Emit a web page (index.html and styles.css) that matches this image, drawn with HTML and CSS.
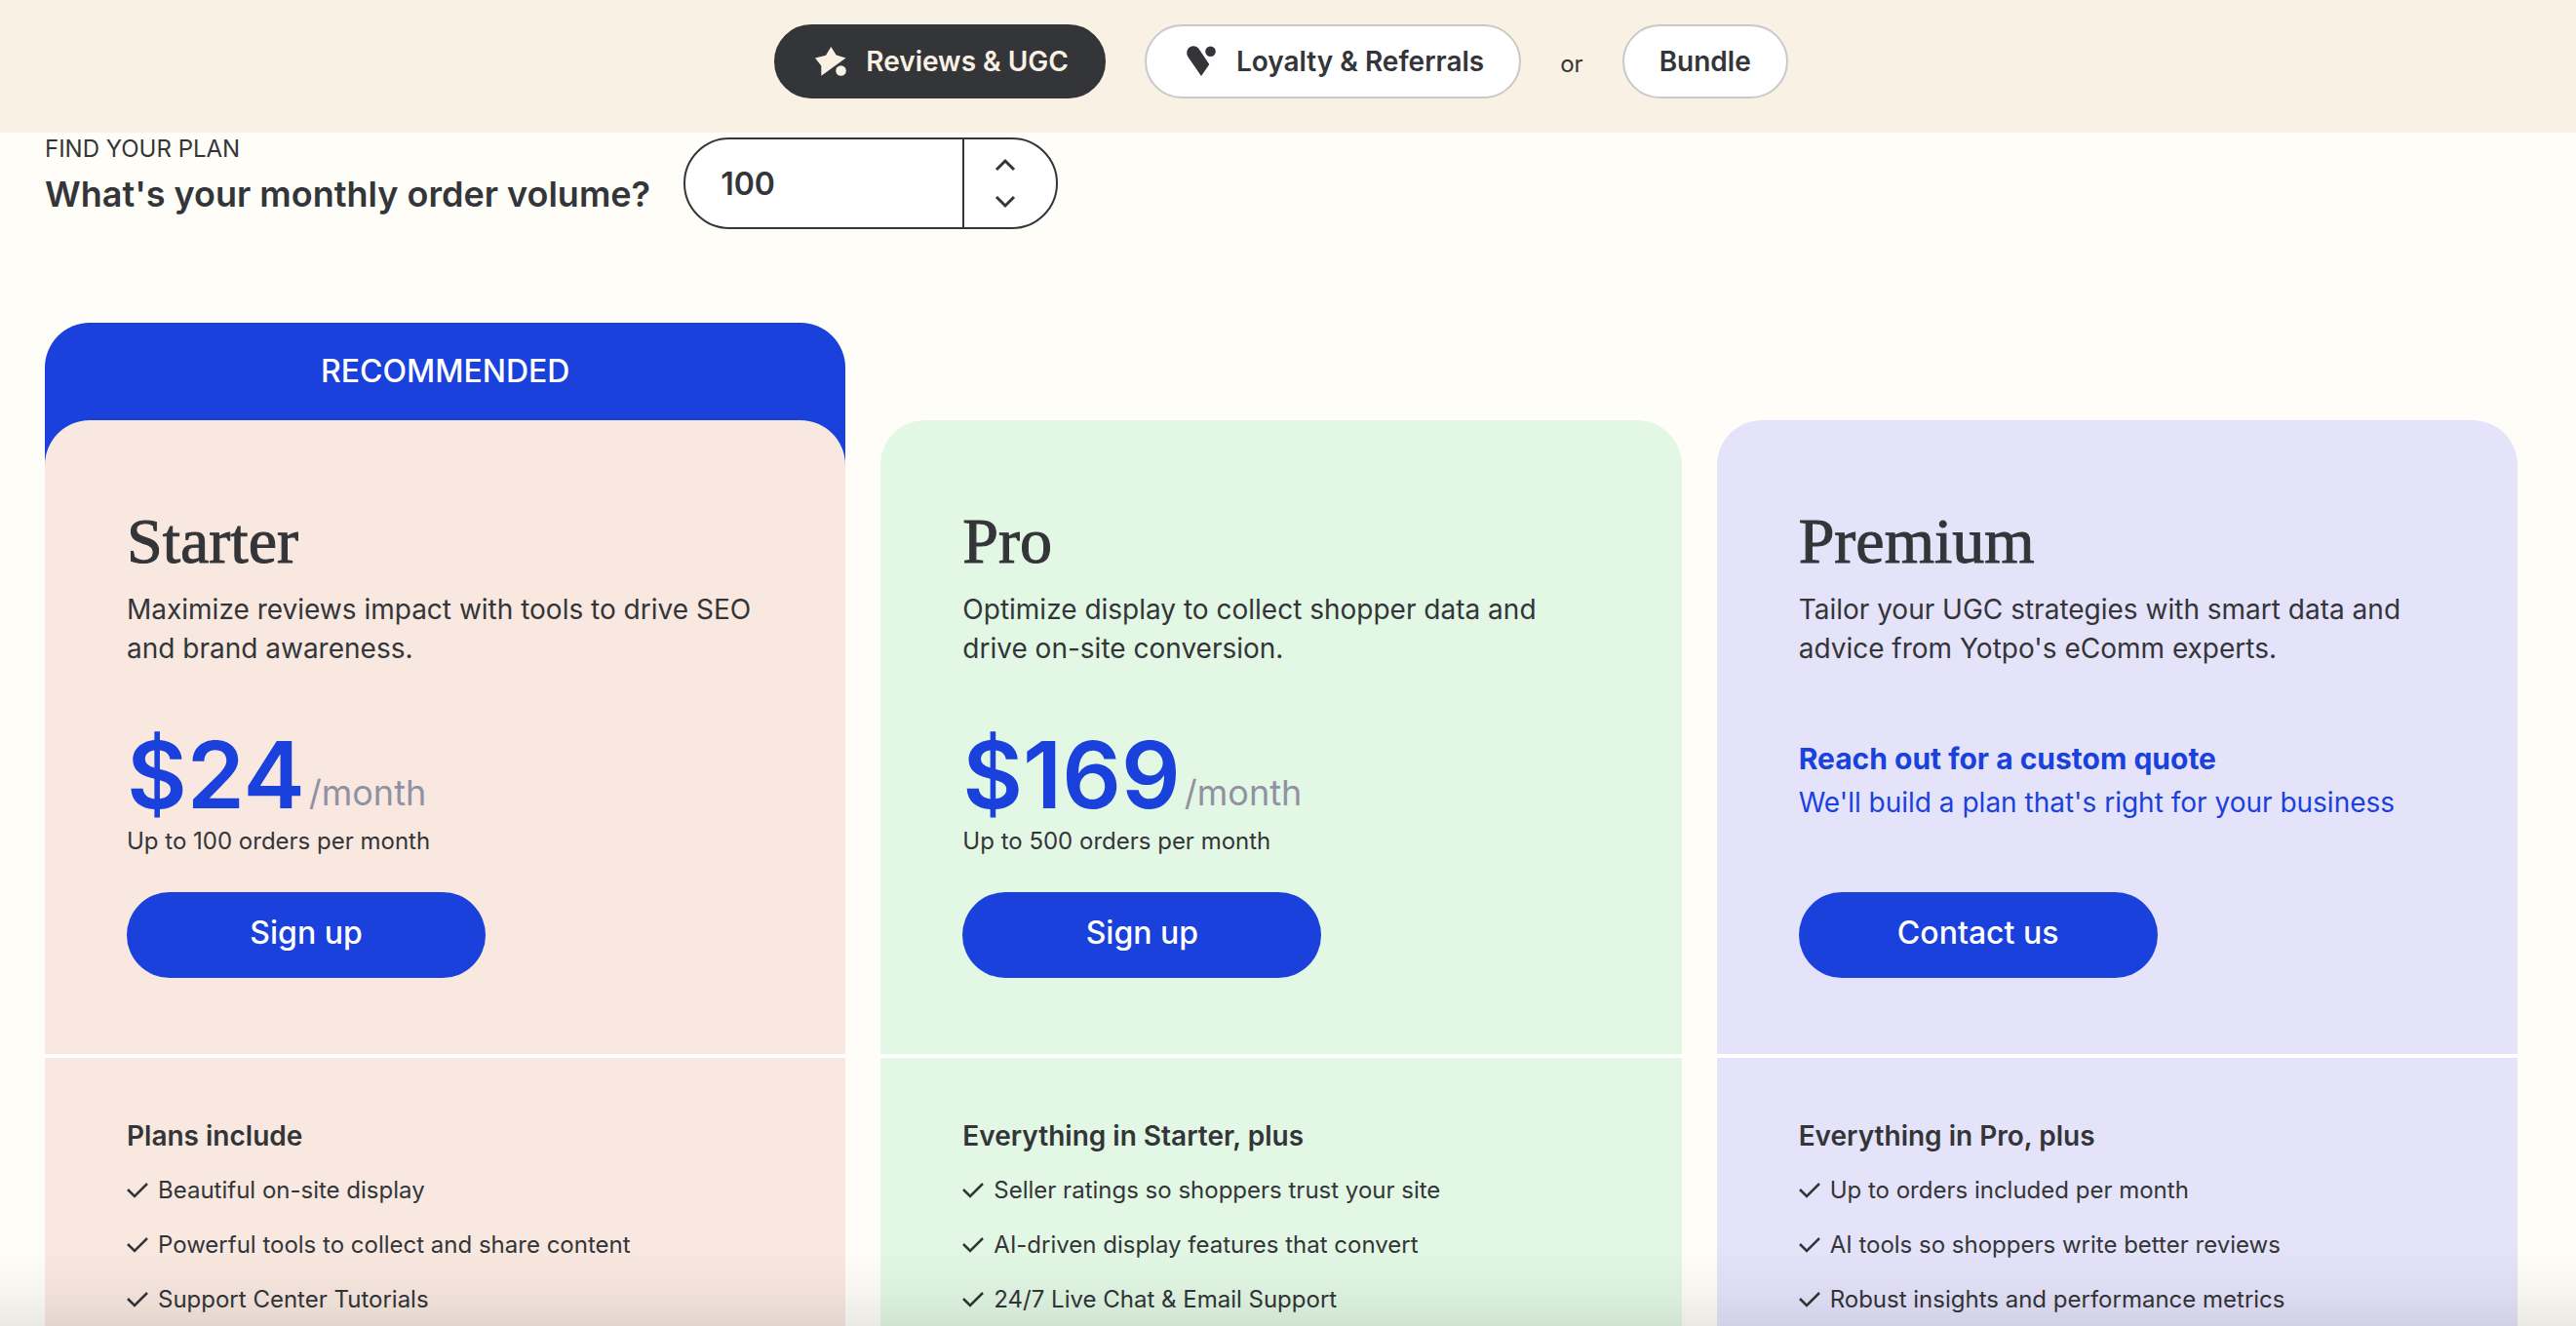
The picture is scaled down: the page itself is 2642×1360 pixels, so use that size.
FILE: index.html
```html
<!DOCTYPE html>
<html lang="en">
<head>
  <meta charset="UTF-8">
  <meta name="viewport" content="width=device-width, initial-scale=1.0">
  <title>Pricing</title>
  <link rel="stylesheet" href="styles.css">
</head>
<body>
  <nav class="product-nav">
    <button class="pill active" type="button">
      <svg class="pill-icon" viewBox="-4 0 36 32" fill="currentColor" aria-hidden="true">
        <path d="M16.300 1 21.700 9.500 31.500 12.500 6.300 30.700V20.500L0 12.500 11 9.800Z"/>
        <circle cx="26.500" cy="25.500" r="5.300"/>
      </svg>
      Reviews &amp; UGC
    </button>
    <button class="pill" type="button">
      <svg class="pill-icon" viewBox="-4 0 36 32" fill="currentColor" aria-hidden="true">
        <path d="M2.400 11.200C-.6 6 2.600.3 8 .3c2.400 0 4.400 1 5.700 3L24.300 19 16 31Z"/>
        <circle cx="25.500" cy="5.800" r="5.300"/>
      </svg>
      Loyalty &amp; Referrals
    </button>
    <span class="or">or</span>
    <button class="pill" type="button">Bundle</button>
  </nav>

  <main class="pricing">
    <form class="volume">
      <label class="volume-label" for="orders">
        <span class="volume-eyebrow">FIND YOUR PLAN</span>
        <span class="volume-question">What's your monthly order volume?</span>
      </label>
      <div class="stepper">
        <input class="stepper-input" id="orders" type="number" min="0" step="50" value="100">
        <div class="stepper-buttons">
          <button class="step" id="stepUp" type="button" aria-label="Increase">
            <svg class="chevron" viewBox="0 0 22 14" aria-hidden="true"><path d="M2 12 11 3l9 9"/></svg>
          </button>
          <button class="step" id="stepDown" type="button" aria-label="Decrease">
            <svg class="chevron" viewBox="0 0 22 14" aria-hidden="true"><path d="m2 2 9 9 9-9"/></svg>
          </button>
        </div>
      </div>
    </form>

    <div class="plans">
      <section class="plan recommended">
        <div class="ribbon">RECOMMENDED</div>
        <div class="card starter">
          <div class="card-top">
            <h2 class="plan-name">Starter</h2>
            <p class="plan-desc">Maximize reviews impact with tools to drive SEO and brand awareness.</p>
            <div class="offer">
              <div class="price"><strong class="amount">$24</strong><span class="period">/month</span></div>
              <p class="limit">Up to 100 orders per month</p>
            </div>
            <a class="cta" href="#">Sign up</a>
          </div>
          <div class="card-features">
            <h3 class="features-title">Plans include</h3>
            <ul class="features">
              <li>Beautiful on-site display</li>
              <li>Powerful tools to collect and share content</li>
              <li>Support Center Tutorials</li>
            </ul>
          </div>
        </div>
      </section>

      <section class="plan">
        <div class="card pro">
          <div class="card-top">
            <h2 class="plan-name">Pro</h2>
            <p class="plan-desc">Optimize display to collect shopper data and drive on-site conversion.</p>
            <div class="offer">
              <div class="price"><strong class="amount">$169</strong><span class="period">/month</span></div>
              <p class="limit">Up to 500 orders per month</p>
            </div>
            <a class="cta" href="#">Sign up</a>
          </div>
          <div class="card-features">
            <h3 class="features-title">Everything in Starter, plus</h3>
            <ul class="features">
              <li>Seller ratings so shoppers trust your site</li>
              <li>AI-driven display features that convert</li>
              <li>24/7 Live Chat &amp; Email Support</li>
            </ul>
          </div>
        </div>
      </section>

      <section class="plan">
        <div class="card premium">
          <div class="card-top">
            <h2 class="plan-name">Premium</h2>
            <p class="plan-desc">Tailor your UGC strategies with smart data and advice from Yotpo's eComm experts.</p>
            <div class="offer quote">
              <p class="quote-title">Reach out for a custom quote</p>
              <p class="quote-text">We'll build a plan that's right for your business</p>
            </div>
            <a class="cta" href="#">Contact us</a>
          </div>
          <div class="card-features">
            <h3 class="features-title">Everything in Pro, plus</h3>
            <ul class="features">
              <li>Up to orders included per month</li>
              <li>AI tools so shoppers write better reviews</li>
              <li>Robust insights and performance metrics</li>
            </ul>
          </div>
        </div>
      </section>
    </div>
  </main>

  <div class="bottom-shade"></div>

  <script>
    const orders = document.getElementById('orders')
    document.getElementById('stepUp').addEventListener('click', () => orders.stepUp())
    document.getElementById('stepDown').addEventListener('click', () => orders.stepDown())

    // put a tick in front of every feature
    document.querySelectorAll('.features li').forEach(item => {
      item.insertAdjacentHTML('afterbegin', '<svg class="check" viewBox="0 0 22 16" aria-hidden="true"><path d="m1 7 7 7L21 1"/></svg>')
    })
  </script>
</body>
</html>
```
FILE: styles.css
```css
* {
  box-sizing: border-box;
}
body {
  margin: 0;
  height: 100vh;
  overflow: hidden;
  font-family: Inter, sans-serif;
  font-size: 24px;
  color: #333538;
  background: #fefdf8;
}
h2, h3, p, ul {
  margin: 0;
  padding: 0;
}
button, input {
  font-family: inherit;
  color: inherit;
}
button {
  cursor: pointer;
}
.product-nav {
  display: flex;
  align-items: center;
  justify-content: center;
  gap: 40px;
  padding: 25px 60px 35px 46px;
  background: #f9f1e4;
}
.pill {
  display: flex;
  align-items: center;
  gap: 20px;
  height: 76px;
  padding: 0 36px;
  font-size: 28px;
  font-weight: 600;
  background: #fff;
  border: 2px solid #c9c9c9;
  border-radius: 38px;
}
.pill.active {
  color: #f9f1e4;
  background: #333538;
  border-color: #333538;
}
.pill-icon {
  width: 36px;
  height: 32px;
}
.or {
  padding-top: 4px;
}
.pricing {
  padding: 5px 60px 0 46px;
}
.volume {
  display: flex;
  align-items: flex-start;
  gap: 34px;
  margin-bottom: 96px;
}
.volume-eyebrow {
  display: block;
  line-height: 24px;
  margin-bottom: 12px;
}
.volume-question {
  display: block;
  font-size: 36px;
  font-weight: 600;
  line-height: 44px;
}
.stepper {
  display: flex;
  width: 384px;
  height: 94px;
  border: 2px solid #333538;
  border-radius: 47px;
  background: #fff;
  overflow: hidden;
}
.stepper-input {
  flex: 1;
  min-width: 0;
  padding: 0 36px;
  border: 0;
  outline: 0;
  background: none;
  font-size: 32px;
  font-weight: 600;
  appearance: textfield;
}
.stepper-input::-webkit-inner-spin-button {
  appearance: none;
}
.stepper-buttons {
  display: flex;
  flex-direction: column;
  justify-content: center;
  width: 96px;
  padding-right: 10px;
  border-left: 2px solid #333538;
}
.step {
  display: flex;
  align-items: center;
  justify-content: center;
  height: 38px;
  padding: 0;
  border: 0;
  background: none;
}
.chevron {
  width: 22px;
  height: 14px;
  fill: none;
  stroke: currentColor;
  stroke-width: 3;
}
.plans {
  display: grid;
  grid-template-columns: repeat(3, 1fr);
  gap: 36px;
}
.plan {
  padding-top: 100px;
}
.plan.recommended {
  padding-top: 0;
  background: #1a41dc;
  border-radius: 46px 46px 0 0;
}
.ribbon {
  line-height: 100px;
  text-align: center;
  font-size: 32px;
  font-weight: 500;
  color: #fff;
}
.card {
  border-radius: 46px 46px 0 0;
}
.starter {
  background: #f8e8e0;
}
.pro {
  background: #e2f8e4;
}
.premium {
  background: #e5e3fa;
}
.card-top {
  padding: 88px 84px 78px;
  border-bottom: 4px solid #fff;
}
.plan-name {
  margin-bottom: 14px;
  font-family: "Liberation Serif", serif;
  font-size: 66px;
  font-weight: 400;
  line-height: 72px;
  -webkit-text-stroke: 1px currentColor;
}
.plan-desc {
  font-size: 28px;
  line-height: 40px;
}
.offer {
  min-height: 132px;
  margin: 62px 0 36px;
}
.price {
  display: flex;
  align-items: flex-end;
  gap: 4px;
  margin-bottom: 4px;
}
.amount {
  font-size: 95px;
  font-weight: 600;
  line-height: 96px;
  color: #1a41dc;
}
.period {
  font-size: 36px;
  line-height: 60px;
  color: #9191a3;
}
.limit {
  line-height: 32px;
}
.quote {
  padding-top: 8px;
  color: #1a41dc;
}
.quote-title {
  font-size: 30px;
  font-weight: 700;
  line-height: 46px;
}
.quote-text {
  font-size: 28px;
  line-height: 44px;
}
.cta {
  display: block;
  width: 368px;
  padding-bottom: 4px;
  line-height: 84px;
  border-radius: 44px;
  text-align: center;
  text-decoration: none;
  font-size: 32px;
  font-weight: 500;
  color: #fff;
  background: #1a41dc;
}
.card-features {
  padding: 60px 84px;
}
.features-title {
  margin-bottom: 8px;
  font-size: 28px;
  font-weight: 600;
  line-height: 40px;
}
.features {
  list-style: none;
}
.features li {
  display: flex;
  align-items: center;
  gap: 10px;
  line-height: 56px;
}
.check {
  width: 22px;
  height: 16px;
  fill: none;
  stroke: currentColor;
  stroke-width: 2.5;
}
.bottom-shade {
  position: fixed;
  left: 0;
  right: 0;
  bottom: 0;
  height: 80px;
  background: linear-gradient(rgba(0, 0, 0, 0), rgba(0, 0, 0, 0.03) 55%, rgba(0, 0, 0, 0.08));
  pointer-events: none;
}
```
